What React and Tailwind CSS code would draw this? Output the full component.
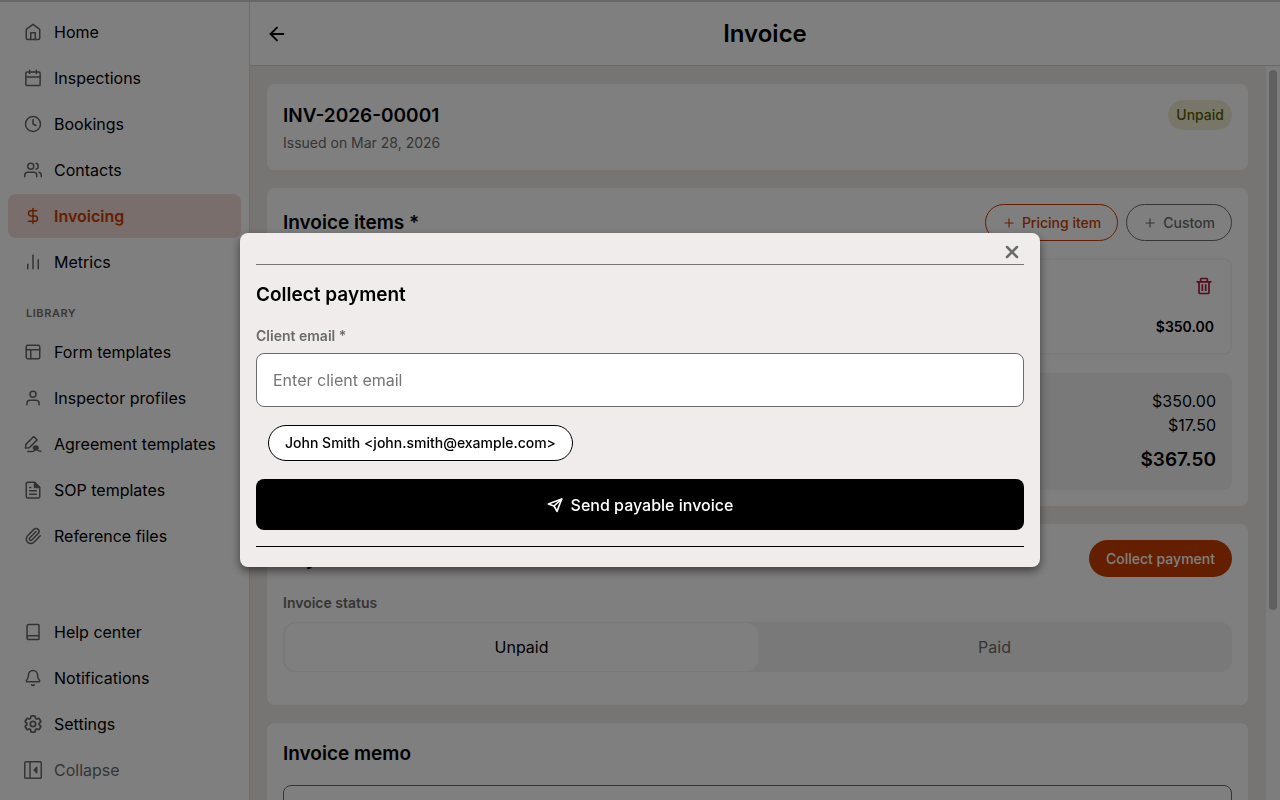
import React, { useState } from 'react';
import { Clock, DollarSign, ChartNoAxesColumn, Paperclip, Book, Bell, ArrowLeft, Plus, X } from 'lucide-react';
import { FiLayout, FiUser, FiUsers } from 'react-icons/fi';
import { BiTrash } from 'react-icons/bi';
import { HiOutlineCog6Tooth } from 'react-icons/hi2';

function Icon({ className, children }) {
    return (
        <svg
            viewBox="0 0 24 24"
            className={className}
            fill="none"
            stroke="currentColor"
            strokeWidth="2"
            strokeLinejoin="round"
            strokeLinecap="round"
            aria-hidden="true"
        >
            {children}
        </svg>
    );
}

function HomeIcon({ className }) {
    return (
        <Icon className={className}>
            <path d="M3 9.500a2 2 0 0 1 .8-1.600L12 1.800l8.200 6.100a2 2 0 0 1 .8 1.600V20a2 2 0 0 1-2 2H5a2 2 0 0 1-2-2z" />
            <path d="M9 22v-9h6v9" />
        </Icon>
    );
}

function CalendarIcon({ className }) {
    return (
        <Icon className={className}>
            <rect x="2.500" y="4" width="19" height="18" rx="1.500" />
            <path d="M7.500 1.500V6M16.500 1.500V6M2.500 10.500h19" />
        </Icon>
    );
}

function SignIcon({ className }) {
    return (
        <Icon className={className}>
            <path d="M2 17.500 2.500 12.500 13 2l4.500 4.500L7 17z" />
            <path d="M5 22h6c2.500 0 3-2.500 5-2.500s2.500 2.500 6.500 2" />
            <path d="M12.500 18a3.200 3.200 0 1 1 6.400 0c-1 1.800-5.400 1.800-6.400 0z" fill="currentColor" />
        </Icon>
    );
}

function DocIcon({ className }) {
    return (
        <Icon className={className}>
            <path d="M14 1.500H5a2 2 0 0 0-2 2v17a2 2 0 0 0 2 2h14a2 2 0 0 0 2-2v-12z" />
            <path d="M14 2v6.500h6.500z" fill="currentColor" />
            <path d="M7.500 8.500H9M7.500 13h9M7.500 17.500h9" />
        </Icon>
    );
}

function CogIcon({ className }) {
    return <HiOutlineCog6Tooth viewBox="2 2 20 20" strokeWidth="2" className={className} />;
}

function CollapseIcon({ className }) {
    return (
        <Icon className={className}>
            <rect x="1" y="1" width="22" height="22" rx="1.500" />
            <path d="M8 1v22" />
            <path d="M17 8.500v7L13.500 12z" fill="currentColor" />
        </Icon>
    );
}

function PlaneIcon({ className }) {
    return (
        <Icon className={className}>
            <path d="M2 10.500 22 3l-7 18.500-4.500-8z" strokeWidth="2.500" />
            <path d="M10.500 13.500 22 3" strokeWidth="2.500" />
        </Icon>
    );
}

const MAIN_NAV = [
    { label: 'Home', icon: HomeIcon },
    { label: 'Inspections', icon: CalendarIcon },
    { label: 'Bookings', icon: Clock },
    { label: 'Contacts', icon: FiUsers },
    { label: 'Invoicing', icon: DollarSign, active: true },
    { label: 'Metrics', icon: ChartNoAxesColumn },
];

const LIBRARY_NAV = [
    { label: 'Form templates', icon: FiLayout },
    { label: 'Inspector profiles', icon: FiUser },
    { label: 'Agreement templates', icon: SignIcon },
    { label: 'SOP templates', icon: DocIcon },
    { label: 'Reference files', icon: Paperclip },
];

const FOOTER_NAV = [
    { label: 'Help center', icon: Book },
    { label: 'Notifications', icon: Bell },
    { label: 'Settings', icon: CogIcon },
];

function NavItem({ label, icon: ItemIcon, active }) {
    return (
        <li>
            <a
                href="#"
                className={
                    active
                        ? 'flex h-11 items-center gap-3 rounded-lg bg-[#f3dcd6] px-4 font-semibold text-[#c73e00]'
                        : 'flex h-11 items-center gap-3 rounded-lg px-4 text-black'
                }
            >
                <ItemIcon className={active ? 'size-[18px] shrink-0' : 'size-[18px] shrink-0 text-[#666666]'} />
                {label}
            </a>
        </li>
    );
}

function Sidebar() {
    return (
        <nav className="flex w-[250px] shrink-0 flex-col border-r border-[#dcd8d5] bg-white p-2">
            <ul className="flex flex-col gap-0.5">
                {MAIN_NAV.map((item) => <NavItem key={item.label} {...item} />)}
            </ul>
            <h2 className="px-[18px] pt-5 pb-2 text-[11px] leading-[18px] font-semibold tracking-wider text-[#77716c]">LIBRARY</h2>
            <ul className="flex flex-col gap-0.5">
                {LIBRARY_NAV.map((item) => <NavItem key={item.label} {...item} />)}
            </ul>
            <ul className="mt-auto flex flex-col gap-0.5">
                {FOOTER_NAV.map((item) => <NavItem key={item.label} {...item} />)}
                <li>
                    <button type="button" className="flex h-11 w-full items-center gap-3 rounded-lg px-4 text-[#6b6b6b]">
                        <CollapseIcon className="size-[18px] shrink-0" />
                        Collapse
                    </button>
                </li>
            </ul>
        </nav>
    );
}

function Card({ children }) {
    return <section className="rounded-lg bg-white p-4">{children}</section>;
}

function InvoicePage() {
    return (
        <main className="flex min-w-0 flex-1 flex-col">
            <header className="grid h-16 shrink-0 grid-cols-[1fr_auto_1fr] items-center border-b border-[#d6d3d0] bg-white px-4">
                <button type="button" aria-label="Back" className="w-fit">
                    <ArrowLeft className="size-[22px]" />
                </button>
                <h1 className="text-2xl font-semibold">Invoice</h1>
            </header>

            <div className="flex min-h-0 flex-1 bg-[#efebe7]">
                <div className="flex min-w-0 flex-1 flex-col gap-[18px] overflow-hidden p-[18px] pl-[17px] *:shrink-0">
                    <Card>
                        <div className="flex items-start justify-between">
                            <div>
                                <h2 className="text-[19px] leading-8 font-semibold">INV-2026-00001</h2>
                                <p className="text-sm leading-[22px] text-[#6b6b6b]">Issued on Mar 28, 2026</p>
                            </div>
                            <span className="rounded-full bg-[#eeedd2] px-2 py-1 text-sm leading-[22px] font-medium text-[#5c5c00]">Unpaid</span>
                        </div>
                    </Card>

                    <Card>
                        <div className="flex items-center justify-between">
                            <h2 className="text-[19px] leading-7 font-semibold">Invoice items *</h2>
                            <div className="flex gap-2">
                                <button type="button" className="flex h-[37px] items-center gap-1.5 rounded-full border border-[#c73e00] px-4 text-sm font-medium text-[#c73e00]">
                                    <Plus className="size-3.5" />
                                    Pricing item
                                </button>
                                <button type="button" className="flex h-[37px] items-center gap-1.5 rounded-full border border-[#6b6b6b] px-4 text-sm font-medium text-[#6b6b6b]">
                                    <Plus className="size-3.5" />
                                    Custom
                                </button>
                            </div>
                        </div>
                        <div className="mt-[17px] flex h-[97px] flex-col items-end justify-between rounded-lg border-2 border-[#f4f4f4] p-4">
                            <button type="button" aria-label="Remove item" className="text-[#a8193d]">
                                <BiTrash className="size-5" />
                            </button>
                            <span className="text-sm leading-5 font-semibold">$350.00</span>
                        </div>
                        <div className="mt-[18px] rounded-lg bg-[#f3f3f3] p-4 text-right leading-6">
                            <p>$350.00</p>
                            <p>$17.50</p>
                            <p className="mt-2 text-[19px] leading-[29px] font-semibold">$367.50</p>
                        </div>
                    </Card>

                    <Card>
                        <div className="flex items-center justify-between">
                            <h2 className="text-[19px] leading-7 font-semibold">Payment</h2>
                            <button type="button" className="h-[37px] rounded-full bg-[#c73e00] px-[17px] text-sm font-medium text-white">Collect payment</button>
                        </div>
                        <p className="mt-[14px] text-sm leading-6 font-semibold text-[#6b6b6b]">Invoice status</p>
                        <div className="mt-[7px] mb-[17px] grid h-[50px] grid-cols-2 rounded-xl bg-[#f3f3f3] p-px pl-0.5">
                            <button type="button" className="rounded-xl bg-white">Unpaid</button>
                            <button type="button" className="text-[#6b6b6b]">Paid</button>
                        </div>
                    </Card>

                    <Card>
                        <label htmlFor="memo" className="block text-[19px] leading-[30px] font-semibold">Invoice memo</label>
                        <textarea id="memo" rows="3" className="mt-4 block w-full rounded-lg border border-[#6b6b6b] p-4" />
                    </Card>
                </div>

                <div className="w-[14px] bg-[#fafafa] px-[3px] pt-1">
                    <div className="h-[540px] rounded-full bg-[#c1c1c1]" />
                </div>
            </div>
        </main>
    );
}

function CollectPaymentDialog() {
    const [email, setEmail] = useState('');

    return (
        <div className="fixed inset-0 flex items-center justify-center bg-black/50">
            <div role="dialog" aria-labelledby="dialog-title" className="w-full max-w-[800px] rounded-lg bg-[#efeceb] px-4 pb-5 shadow-[0_4px_10px_rgba(0,0,0,0.5)]">
                <div className="flex h-8 items-center justify-end border-b border-[#757575] pt-1.5">
                    <button type="button" aria-label="Close" className="px-0.5 text-[#6b6b6b]">
                        <X className="size-5" strokeWidth={3} />
                    </button>
                </div>
                <h2 id="dialog-title" className="mt-4 text-[19px] leading-7 font-semibold">Collect payment</h2>
                <label htmlFor="email" className="mt-4 block text-sm leading-[22px] font-semibold text-[#6b6b6b]">Client email *</label>
                <input
                    id="email"
                    type="email"
                    value={email}
                    onChange={(e) => setEmail(e.target.value)}
                    placeholder="Enter client email"
                    className="mt-1.5 block h-[54px] w-full rounded-lg border border-[#6b6b6b] bg-white px-4 placeholder:text-[#757575]"
                />
                <button
                    type="button"
                    onClick={() => setEmail('john.smith@example.com')}
                    className="mt-[18px] ml-3 block h-9 rounded-full border border-black bg-white px-4 text-sm font-medium"
                >
                    John Smith &lt;john.smith@example.com&gt;
                </button>
                <button type="button" className="mt-[18px] flex h-[51px] w-full items-center justify-center gap-2 rounded-lg bg-black font-medium text-white">
                    <PlaneIcon className="size-4" />
                    Send payable invoice
                </button>
                <hr className="mt-4 border-black" />
            </div>
        </div>
    );
}

export default function App() {
    return (
        <div className="flex h-screen overflow-hidden border-t-2 border-[#d0d0d0] font-[Inter,sans-serif] text-base text-black">
            <Sidebar />
            <InvoicePage />
            <CollectPaymentDialog />
        </div>
    );
}
